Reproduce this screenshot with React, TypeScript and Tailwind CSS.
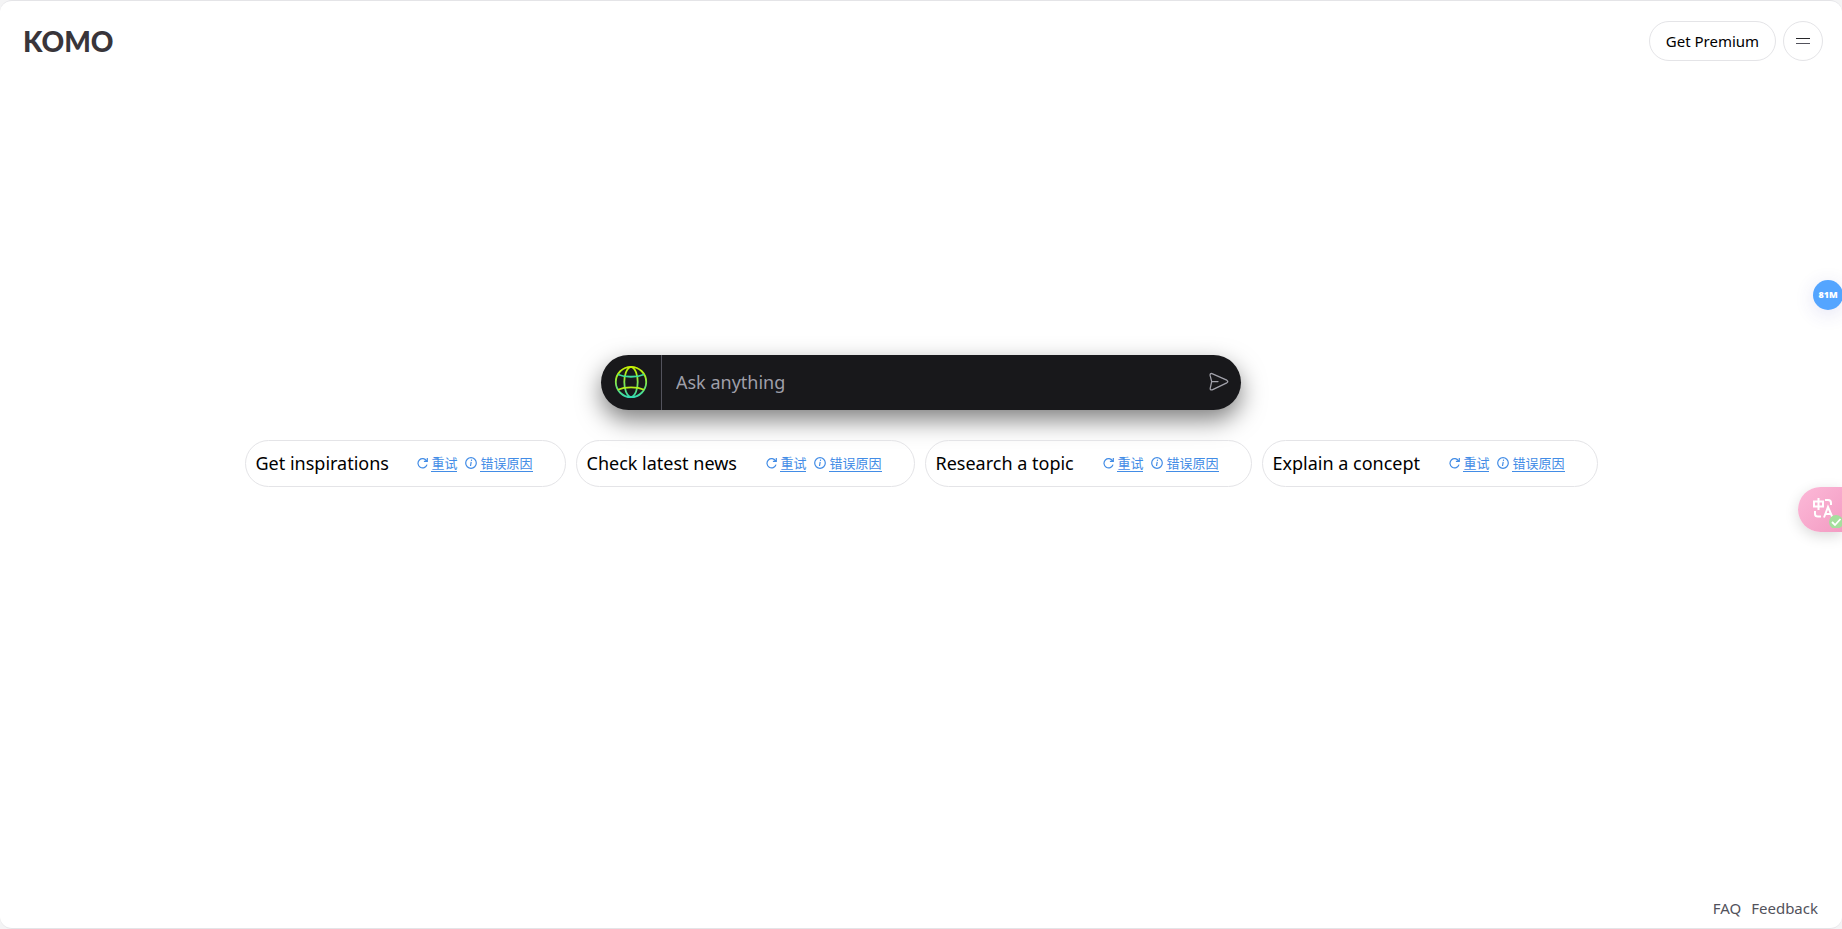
import React from "react";

const suggestions = [
  { label: "Get inspirations", width: "w-[321px]" },
  { label: "Check latest news", width: "w-[339px]" },
  { label: "Research a topic", width: "w-[327px]" },
  { label: "Explain a concept", width: "w-[336px]" },
];

function GlobeIcon() {
  return (
    <svg width="34" height="34" viewBox="0 0 34 34" fill="none" strokeWidth="1.8" aria-hidden="true">
      <defs>
        <linearGradient id="globe" gradientUnits="userSpaceOnUse" x1="0" y1="1" x2="0" y2="33">
          <stop stopColor="#c8f000" />
          <stop offset="0.3" stopColor="#a8ee20" />
          <stop offset="1" stopColor="#2fd9b5" />
        </linearGradient>
      </defs>
      <g stroke="url(#globe)">
        <circle cx="17" cy="17" r="15.2" />
        <path d="M17 1.8C12.5 3 10.3 10 10.3 17S12.5 31 17 32.2C21.5 31 23.7 24 23.7 17S21.5 3 17 1.8Z" />
      </g>
      <path d="M4 9.5C11 12.5 23 12.5 30 9.5" stroke="#3ddc9c" />
      <path d="M4 24.8C11 21.6 23 21.6 30 24.8" stroke="#b4ef1a" />
    </svg>
  );
}

function SendIcon() {
  return (
    <svg width="20" height="20" viewBox="0 0 20 20" fill="none" stroke="#a1a1aa" strokeWidth="1.3" strokeLinecap="round" strokeLinejoin="round" aria-hidden="true">
      <path d="M3 1.6 17.8 8.2Q19.8 9.5 17.8 10.8L3.2 17.8Q1 18.5 1.2 16.3L2.7 9.6 1.1 3.4Q1 1 3 1.6ZM2.7 9.6H9" />
    </svg>
  );
}

function RetryIcon() {
  return (
    <svg width="11" height="12" viewBox="0 0 11 12" fill="none" stroke="currentColor" strokeWidth="1.2" aria-hidden="true">
      <path d="M9.6 4A4.6 4.6 0 1 0 10 7.6M10.3 1V4.4H6.9" />
    </svg>
  );
}

function InfoIcon() {
  return (
    <svg width="12" height="12" viewBox="0 0 12 12" fill="none" stroke="currentColor" strokeWidth="1.2" aria-hidden="true">
      <circle cx="6" cy="6" r="5.3" />
      <path d="M6.6 2.7 6.4 3.9M6.2 4.8 5.5 9" />
    </svg>
  );
}

function Suggestion({ label, width }: { label: string; width: string }) {
  return (
    <div className={`flex h-[47px] shrink-0 items-center justify-between rounded-full border border-zinc-200 pr-8 pl-2.5 ${width}`}>
      <button type="button" className="text-lg whitespace-nowrap text-black">
        {label}
      </button>
      <div className="flex items-center gap-2 text-[13px] leading-4 whitespace-nowrap text-[#428ce6]">
        <a href="#retry" className="flex items-center gap-[3px]">
          <RetryIcon />
          <span className="border-b border-current">重试</span>
        </a>
        <a href="#reason" className="flex items-center gap-[3px]">
          <InfoIcon />
          <span className="border-b border-current">错误原因</span>
        </a>
      </div>
    </div>
  );
}

function TranslateIcon() {
  return (
    <svg width="22" height="22" viewBox="0 0 22 22" fill="none" stroke="white" strokeWidth="2" aria-hidden="true">
      <path d="M2 4.5H11V9.5H2ZM6.5 1V13M13 3H16Q19 3 19 6V8M3 14V17Q3 19.5 6 19.5H9M12 20.5 16 10 20.5 20.5M13.5 17H19" />
    </svg>
  );
}

export default function App() {
  return (
    <div className="relative min-h-screen overflow-hidden bg-zinc-100 font-['Noto_Sans','Noto_Sans_CJK_SC',sans-serif]">
      <div className="flex min-h-screen flex-col rounded-xl border-y border-zinc-200 bg-white">
        <header className="flex items-center justify-between pt-5 pr-[19px] pl-[23px]">
          <a href="#home" className="font-['Lato',sans-serif] text-[28px] leading-10 font-black text-[#39353a]">
            KOMO
          </a>
          <div className="flex items-center gap-[7px]">
            <button type="button" className="h-10 w-[127px] rounded-full border border-zinc-200 text-[15px] whitespace-nowrap text-black">
              Get Premium
            </button>
            <button type="button" aria-label="Menu" className="flex size-10 flex-col items-center justify-center gap-1 rounded-full border border-zinc-200">
              <span className="h-px w-3.5 bg-zinc-800" />
              <span className="h-px w-3.5 bg-zinc-600" />
            </button>
          </div>
        </header>

        <main className="flex flex-1 flex-col items-center justify-center gap-[30px] px-4 pb-[116px]">
          <form className="flex h-[55px] w-full max-w-[640px] items-center overflow-hidden rounded-full bg-[#18181b] shadow-[0_10px_24px_rgba(0,0,0,0.5)]" onSubmit={(e) => e.preventDefault()}>
            <button type="button" aria-label="Search scope" className="flex h-full w-[61px] shrink-0 items-center justify-center border-r border-zinc-600">
              <GlobeIcon />
            </button>
            <input type="text" aria-label="Ask anything" placeholder="Ask anything" className="min-w-0 flex-1 bg-transparent px-3.5 text-lg text-white outline-none placeholder:text-zinc-400" />
            <button type="submit" aria-label="Send" className="mr-3 shrink-0">
              <SendIcon />
            </button>
          </form>
          <div className="flex flex-wrap justify-center gap-2.5">
            {suggestions.map((s) => (
              <Suggestion key={s.label} {...s} />
            ))}
          </div>
        </main>

        <footer className="flex justify-end gap-2.5 pr-6 pb-2 text-[15px] leading-6 text-zinc-600">
          <a href="#faq">FAQ</a>
          <a href="#feedback">Feedback</a>
        </footer>
      </div>

      <button type="button" className="absolute top-[280px] -right-px flex size-[30px] items-center justify-center rounded-full bg-[#54a5ff] font-['Open_Sans',sans-serif] text-[9px] font-extrabold text-white shadow-[0_4px_20px_rgba(60,60,180,0.14)]">
        81M
      </button>
      <button type="button" aria-label="Translate" className="absolute top-[487px] right-0 flex h-[45px] w-11 items-center rounded-l-full bg-linear-to-br from-[#fcb9d8] to-[#f39cc3] pb-1 pl-3.5 shadow-[0_4px_14px_rgba(0,0,0,0.15)]">
        <TranslateIcon />
        <svg className="absolute right-0 bottom-1 size-[13px]" viewBox="0 0 13 13" aria-hidden="true">
          <circle cx="7" cy="7" r="7" fill="#a5df9d" />
          <path d="M3 7 6 10 11.5 4" fill="none" stroke="white" strokeWidth="1.8" />
        </svg>
      </button>
    </div>
  );
}
